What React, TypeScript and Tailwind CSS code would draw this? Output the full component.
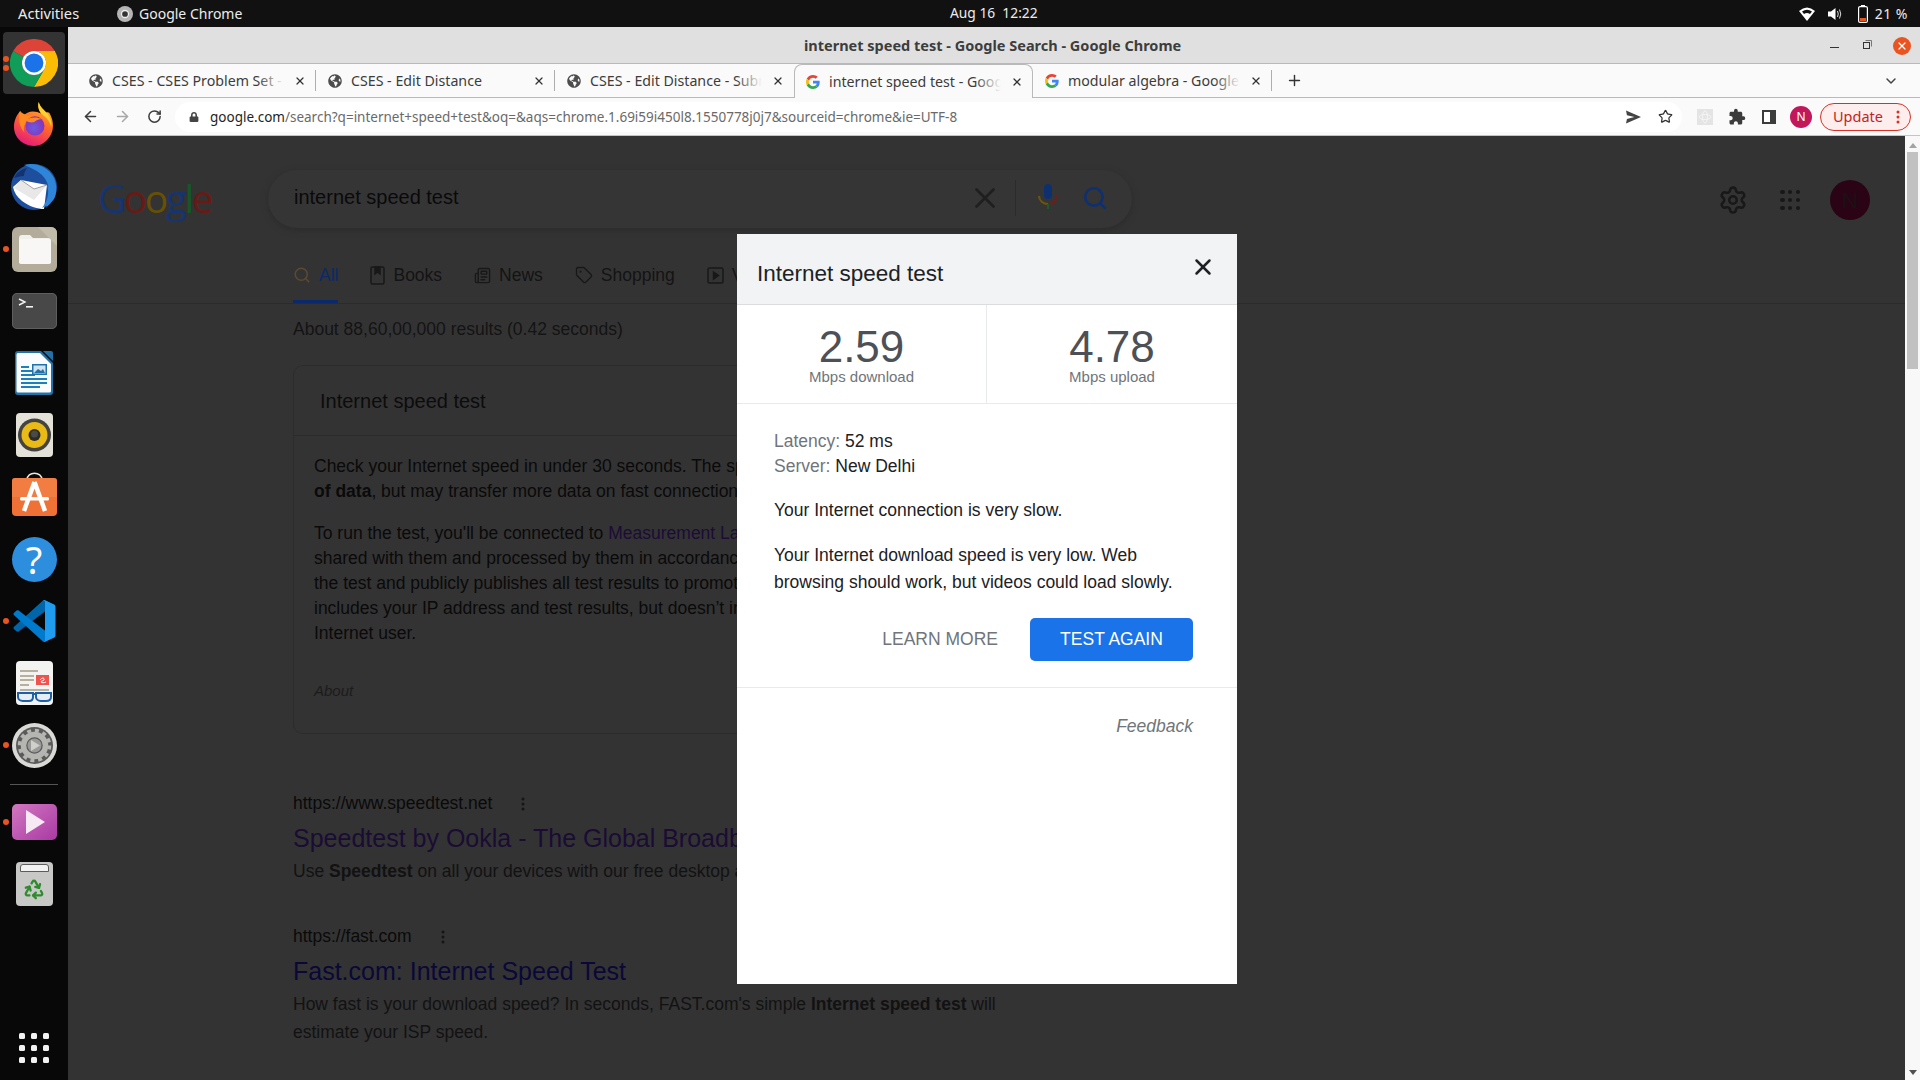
import React from "react";
import { ArrowLeft, ArrowRight, RotateCw, X, Plus, ChevronDown, Star, Search, Settings, Tag, Newspaper, Recycle } from "lucide-react";
import { FaGlobeAmericas, FaLock } from "react-icons/fa";
import { MdExtension } from "react-icons/md";

const Dot = () => <span className="w-[6px] h-[6px] rounded-full bg-[#e95420] block" />;

function GoogleG({ size = 14 }: { size?: number }) {
  return (
    <svg width={size} height={size} viewBox="0 0 48 48" className="shrink-0">
      <path fill="#EA4335" d="M24 9.5c3.5 0 6.7 1.2 9.2 3.6l6.9-6.9C35.9 2.4 30.4 0 24 0 14.6 0 6.5 5.4 2.6 13.2l8 6.2C12.4 13.7 17.7 9.5 24 9.5z" />
      <path fill="#4285F4" d="M46.9 24.5c0-1.6-.1-3.1-.4-4.5H24v9h12.9c-.6 3-2.2 5.5-4.7 7.2l7.7 6c4.5-4.2 7-10.3 7-17.7z" />
      <path fill="#FBBC05" d="M10.5 28.6c-.5-1.4-.8-3-.8-4.6s.3-3.2.8-4.6l-8-6.2C.9 16.5 0 20.1 0 24s.9 7.5 2.6 10.8l7.9-6.2z" />
      <path fill="#34A853" d="M24 48c6.5 0 11.9-2.1 15.9-5.8l-7.7-6c-2.2 1.4-4.9 2.3-8.2 2.3-6.3 0-11.6-4.2-13.5-9.9l-8 6.2C6.5 42.6 14.6 48 24 48z" />
    </svg>
  );
}

function ChromeLogo() {
  return (
    <svg width="48" height="48" viewBox="0 0 48 48">
      <path fill="#db4437" d="M3.2 12A24 24 0 0 1 44.8 12H24A12 12 0 0 0 13.6 18Z" />
      <path fill="#fbbc05" d="M44.8 12A24 24 0 0 1 24 48L34.4 30A12 12 0 0 0 24 12Z" />
      <path fill="#0f9d58" d="M3.2 12L13.6 18A12 12 0 0 0 34.4 30L24 48A24 24 0 0 1 3.2 12Z" />
      <circle cx="24" cy="24" r="12" fill="#fff" />
      <circle cx="24" cy="24" r="9.4" fill="#1a73e8" />
    </svg>
  );
}

function Firefox() {
  return (
    <svg width="42" height="44" viewBox="0 0 44 46" className="mb-[3px]">
      <defs>
        <linearGradient id="ff1" x1="0.7" y1="0" x2="0.3" y2="1">
          <stop offset="0" stopColor="#ffbd2e" />
          <stop offset="0.45" stopColor="#ff6a28" />
          <stop offset="1" stopColor="#e5187f" />
        </linearGradient>
        <radialGradient id="ff2" cx="0.45" cy="0.6" r="0.6">
          <stop offset="0" stopColor="#6a5ce0" />
          <stop offset="1" stopColor="#8a2fb8" />
        </radialGradient>
      </defs>
      <path fill="url(#ff1)" d="M27 0c1 5 5 8 8 11 2-1 3 0 4 2 4 8 4 17-1 24-4 6-10 9-16 9C10 46 1 37 1 26 1 19 4 13 8 9c0 3 1 5 2 6 3-3 7-5 11-5 3 0 6 1 8 2-2-4-3-8-2-12z" />
      <path fill="#ffd02e" d="M27 0c1 5 6 9 9 12 3 4 5 9 4 14-1-5-4-9-8-12-4-3-7-8-5-14z" />
      <path fill="#ff8a1f" d="M7 10c3 1 5 4 9 4 4 0 5-1 7 0-5 1-9 4-10 8-2 4-2 7-1 10-5-5-7-15-5-22z" />
      <circle cx="23" cy="25" r="10" fill="url(#ff2)" />
      <path fill="#ff8a1f" d="M13 19c4-3 12-4 17-1-5 0-6 2-8 3-3 1-6 0-9-2z" />
    </svg>
  );
}

function Thunderbird() {
  return (
    <svg width="48" height="48" viewBox="0 0 48 48" className="mb-[3px]">
      <circle cx="24" cy="25" r="23" fill="#1d4f9e" />
      <path fill="#2f86d8" d="M14 3c10-3 24 1 30 13 3 7 3 15 0 21l-8 9c5-10 5-24-4-33C26 8 20 5 14 3z" />
      <path fill="#12336f" d="M4 16c3-6 8-9 13-10-2 3-3 5-3 8-4 0-7 1-10 2z" />
      <path fill="#fff" d="M3 25l8-7 26 5-3 24c-6 0-14-2-22-8-5-4-8-9-9-14z" />
      <path fill="#e8e8e8" d="M11 18l13 9 13-4-13 15-20-12z" />
      <path fill="none" stroke="#8a8a8a" strokeWidth="0.8" d="M11 18l13 9 13-4" />
      <path fill="#2f86d8" d="M37 23c3 8 0 17-5 23l8-4c3-6 3-14-3-19z" />
    </svg>
  );
}

function Files() {
  return (
    <svg width="45" height="45" viewBox="0 0 45 45">
      <rect x="0" y="0" width="45" height="45" rx="6" fill="#b3ac9b" />
      <path fill="#c1bbaa" d="M26 0h13a6 6 0 0 1 6 6v13z" />
      <path fill="#f2f0ed" d="M7 11a3 3 0 0 1 3-3h8l3 3h15a3 3 0 0 1 3 3v20a3 3 0 0 1-3 3H10a3 3 0 0 1-3-3z" />
      <rect x="7" y="12" width="32" height="25" rx="2.5" fill="#f8f7f5" />
    </svg>
  );
}

function Terminal() {
  return (
    <svg width="45" height="36" viewBox="0 0 45 36">
      <rect width="45" height="36" rx="5" fill="#484848" />
      <rect x="0.5" y="0.5" width="44" height="35" rx="4.5" fill="none" stroke="#5e5e5e" />
      <path d="M7 6l6 3-6 3" fill="none" stroke="#f2f2f2" strokeWidth="1.4" />
      <rect x="14" y="13" width="7" height="1.6" fill="#f2f2f2" />
    </svg>
  );
}

function Writer() {
  return (
    <svg width="38" height="44" viewBox="0 0 38 44">
      <path fill="#2272a8" d="M3 0h23l12 12v29a3 3 0 0 1-3 3H3a3 3 0 0 1-3-3V3a3 3 0 0 1 3-3z" />
      <path fill="#f9fbfc" d="M3 2h22l11 11v27a1.5 1.5 0 0 1-1.5 1.5H3A1.5 1.5 0 0 1 1.500 40V3.500A1.500 1.500 0 0 1 3 2z" />
      <path fill="#2272a8" d="M28 0h8a2 2 0 0 1 2 2v8z" />
      <g fill="#1a80c0">
        <rect x="6" y="15" width="8" height="2" />
        <rect x="6" y="19" width="14" height="2" />
        <rect x="6" y="23" width="14" height="2" />
        <rect x="6" y="27" width="26" height="2" />
        <rect x="6" y="31" width="26" height="2" />
        <rect x="6" y="35" width="19" height="2" />
        <rect x="17" y="13" width="15" height="11" fill="#2272a8" />
      </g>
      <rect x="18.500" y="14.500" width="12" height="8" fill="#cfe3f0" />
      <path d="M19 22l4-4 3 2 2-2 2 4z" fill="#2272a8" />
    </svg>
  );
}

function Rhythmbox() {
  return (
    <svg width="37" height="44" viewBox="0 0 37 44">
      <rect width="37" height="44" rx="4" fill="#e4e1d8" />
      <circle cx="18.500" cy="22" r="16.500" fill="#45433f" />
      <circle cx="18.500" cy="22" r="13" fill="#e8bb17" />
      <circle cx="18.500" cy="22" r="6" fill="#2e2c28" />
      <circle cx="18.500" cy="21" r="3.500" fill="#4c4a44" />
    </svg>
  );
}

function Software() {
  return (
    <svg width="45" height="44" viewBox="0 0 45 44" className="mb-[7px]">
      <path d="M15 8c0-9 15-9 15 0" fill="none" stroke="#efe5d8" strokeWidth="1.500" />
      <path fill="#ef7136" d="M3 6h39a3 3 0 0 1 3 3v31a4 4 0 0 1-4 4H4a4 4 0 0 1-4-4V9a3 3 0 0 1 3-3z" />
      <path fill="#f58a4f" d="M0 25h45V9a3 3 0 0 0-3-3H3a3 3 0 0 0-3 3z" opacity="0.5" />
      <path d="M22.500 10L12 39M22.500 10L33 39" stroke="#fff" strokeWidth="4.500" fill="none" />
      <rect x="8" y="25" width="29" height="3.500" rx="1.500" fill="#fff" />
    </svg>
  );
}

function Help() {
  return (
    <div className="w-[45px] h-[45px] rounded-full bg-[#2e8ede] flex items-center justify-center text-white text-[38px] leading-none font-['Noto_Sans',sans-serif]">?</div>
  );
}

function VSCode() {
  return (
    <svg width="43" height="42" viewBox="0 0 100 100">
      <path fill="#0065a9" d="M96.500 10.800L75.900.9c-2.400-1.200-5.200-.7-7.100 1.200L1.400 63.500c-1.800 1.700-1.800 4.500 0 6.200l5.500 5c1.500 1.300 3.700 1.400 5.300.2L93.400 13.300c2.700-2.100 6.600-.2 6.600 3.300v-.2c0-2.400-1.400-4.700-3.500-5.600z" />
      <path fill="#007acc" d="M96.500 89.200L75.900 99.100c-2.400 1.200-5.200.7-7.100-1.200L1.400 36.500c-1.800-1.700-1.800-4.500 0-6.200l5.500-5c1.500-1.300 3.700-1.400 5.300-.2l81.200 61.600c2.700 2.100 6.600.2 6.600-3.300v.2c0 2.400-1.400 4.700-3.500 5.600z" />
      <path fill="#1f9cf0" d="M75.900 99.100c-2.400 1.200-5.200.7-7.100-1.200 2.300 2.300 6.200.7 6.200-2.600V4.700c0-3.300-3.900-4.900-6.200-2.600 1.900-1.900 4.700-2.400 7.100-1.200l20.600 9.900c2.100 1 3.500 3.200 3.500 5.600v67.200c0 2.400-1.400 4.600-3.500 5.600z" />
    </svg>
  );
}

function Reader() {
  return (
    <svg width="37" height="44" viewBox="0 0 37 44">
      <rect width="37" height="44" rx="4" fill="#f3f3f1" />
      <g fill="#b6b09e">
        <rect x="4" y="9" width="18" height="2" />
        <rect x="4" y="14" width="14" height="2" />
        <rect x="4" y="18" width="14" height="2" />
        <rect x="4" y="23" width="9" height="2" />
        <rect x="4" y="28" width="29" height="2" />
      </g>
      <rect x="20" y="14" width="13" height="10" fill="#ef5350" />
      <path d="M24 19c2-3 5-2 4 0-1 1-3 1-3 2 1 1 3 1 5 0" stroke="#fff" fill="none" strokeWidth="1" />
      <path d="M2 32h15v4c0 3-2 4-4 4H7c-3 0-5-2-5-4zM20 32h15v4c0 3-2 4-5 4h-5c-3 0-5-2-5-4z" fill="#e6eef5" stroke="#1f5fa8" strokeWidth="2" />
      <rect x="16" y="32" width="5" height="2" fill="#1f5fa8" />
    </svg>
  );
}

function Gear() {
  return (
    <svg width="45" height="45" viewBox="0 0 45 45">
      <circle cx="22.500" cy="22.500" r="22.500" fill="#d9d9d6" />
      <circle cx="22.500" cy="22.500" r="18.500" fill="#5a5a5a" />
      <circle cx="22.500" cy="22.500" r="11" fill="none" stroke="#b5b5b2" strokeWidth="5.500" />
      <circle cx="22.500" cy="22.500" r="15" fill="none" stroke="#b5b5b2" strokeWidth="3.500" strokeDasharray="4 3.850" />
      <circle cx="22.500" cy="22.500" r="7" fill="#9a9a98" />
      <path d="M19 17l9 5.500-9 5.500z" fill="#cfcfcc" />
    </svg>
  );
}

function Video() {
  return (
    <svg width="45" height="36" viewBox="0 0 45 36">
      <defs>
        <linearGradient id="vd" x1="0" y1="0" x2="1" y2="1">
          <stop offset="0" stopColor="#d277c0" />
          <stop offset="1" stopColor="#a93aa4" />
        </linearGradient>
      </defs>
      <rect width="45" height="36" rx="5" fill="url(#vd)" />
      <path d="M14 6l19 12-19 12z" fill="#f6e9f4" />
    </svg>
  );
}

function Trash() {
  return (
    <div className="relative w-[37px] h-[44px] rounded-[4px] bg-[#c8c8c6] flex items-center justify-center pt-[10px]">
      <div className="absolute top-[2px] left-[4px] right-[4px] h-[8px] bg-[#f2f2f2] border border-[#5c5c5c] rounded-t-[3px]" />
      <Recycle size={22} color="#2e8b2e" strokeWidth={2.500} />
    </div>
  );
}

function DockItem({ children, dots = 0, active = false }: { children: React.ReactNode; dots?: number; active?: boolean }) {
  return (
    <div className="relative w-[68px] h-[62px] flex items-center justify-center">
      {active && <div className="absolute left-[3px] top-0 w-[62px] h-[62px] bg-[#333] rounded-[4px]" />}
      <div className="relative">{children}</div>
      {dots > 0 && (
        <div className="absolute left-[3px] top-0 bottom-0 flex flex-col justify-center gap-[3px]">
          {Array.from({ length: dots }).map((_, i) => <Dot key={i} />)}
        </div>
      )}
    </div>
  );
}

function Dock() {
  return (
    <div className="w-[68px] shrink-0 bg-[#080808] flex flex-col pt-[5px] pb-[17px]">
      <DockItem active dots={2}><ChromeLogo /></DockItem>
      <DockItem><Firefox /></DockItem>
      <DockItem><Thunderbird /></DockItem>
      <DockItem dots={1}><Files /></DockItem>
      <DockItem><Terminal /></DockItem>
      <DockItem><Writer /></DockItem>
      <DockItem><Rhythmbox /></DockItem>
      <DockItem><Software /></DockItem>
      <DockItem><Help /></DockItem>
      <DockItem dots={1}><VSCode /></DockItem>
      <DockItem><Reader /></DockItem>
      <DockItem dots={1}><Gear /></DockItem>
      <div className="mx-[10px] mt-[8px] mb-[6px] h-px bg-[#555]" />
      <DockItem dots={1}><Video /></DockItem>
      <DockItem><Trash /></DockItem>
      <div className="mt-auto ml-[19px] grid grid-cols-3 gap-[6px] w-[30px]">
        {Array.from({ length: 9 }).map((_, i) => <span key={i} className="w-[6px] h-[6px] rounded-[1.500px] bg-[#f2f2f2]" />)}
      </div>
    </div>
  );
}

function TopBar() {
  return (
    <div className="h-[27px] shrink-0 bg-[#111111] flex items-center text-[#ececec] text-[14px] font-['Noto_Sans',sans-serif]">
      <span className="ml-[18px] w-[99px] text-[14.700px]">Activities</span>
      <svg width="16" height="16" viewBox="0 0 16 16" className="mr-[6px]">
        <circle cx="8" cy="8" r="8" fill="#b5b5b5" />
        <circle cx="8" cy="8" r="3.500" fill="#333" stroke="#eee" strokeWidth="1.300" />
      </svg>
      <span className="w-[811px]">Google Chrome</span>
      <span className="text-[13.800px] whitespace-pre">Aug 16  12:22</span>
      <div className="ml-auto mr-[12px] flex items-center">
        <svg width="16" height="14" viewBox="0 0 16 14" className="mr-[13px]">
          <path d="M0 4 Q8 -3 16 4 L8 14Z" fill="#fff" />
          <path d="M3 4.500 Q8 1 13 4.500 L11 7 Q8 5 5 7Z" fill="#111" />
        </svg>
        <svg width="14" height="14" viewBox="0 0 14 14" className="mr-[16px]">
          <path d="M0 4.500h3L7.500 1v12L3 9.500H0z" fill="#fff" />
          <path d="M9.500 4q1.500 3 0 6M11.500 2.500q2.500 4.500 0 9" stroke="#ddd" fill="none" strokeWidth="1" />
        </svg>
        <svg width="10" height="18" viewBox="0 0 10 18" className="mr-[7px]">
          <rect x="3" y="0" width="4" height="2" fill="#fff" />
          <rect x="0.600" y="1.600" width="8.800" height="15.800" rx="1.500" fill="none" stroke="#fff" strokeWidth="1.200" />
          <rect x="2" y="13" width="6" height="3" fill="#e95420" />
        </svg>
        <span className="text-[14px] tracking-[0.5px]">21 %</span>
      </div>
    </div>
  );
}

type TabT = { title: string; icon: "globe" | "g"; active?: boolean };
const TABS: TabT[] = [
  { title: "CSES - CSES Problem Set - Tasks", icon: "globe" },
  { title: "CSES - Edit Distance", icon: "globe" },
  { title: "CSES - Edit Distance - Submit", icon: "globe" },
  { title: "internet speed test - Google Search", icon: "g", active: true },
  { title: "modular algebra - Google Search", icon: "g" },
];

function Tab({ t, sep }: { t: TabT; sep: boolean }) {
  return (
    <div className={`relative w-[239px] flex items-center shrink-0 ${t.active ? "h-[34px] pl-[10px] bg-[#fafafa] border-x border-t border-[#b9b9b9] rounded-t-[8px] z-10" : "h-[33px] pl-[11px]"}`}>
      <div className="w-[16px] flex justify-center shrink-0">
        {t.icon === "globe" ? <FaGlobeAmericas size={14} color="#4d4d4d" /> : <GoogleG size={14} />}
      </div>
      <div className="relative ml-[8px] w-[172px] overflow-hidden whitespace-nowrap text-[14.200px] leading-[20px] text-[#3c3c3c]">
        {t.title}
        <div className="absolute top-0 right-0 bottom-0 w-[26px] bg-gradient-to-r from-transparent to-[#fafafa]" />
      </div>
      <X size={12} color="#333" strokeWidth={2.500} className="ml-[10px]" />
      {sep && <div className="absolute right-0 top-[6px] h-[21px] w-px bg-[#aeaeae]" />}
    </div>
  );
}

function TitleBar() {
  return (
    <div className="h-[37px] shrink-0 bg-[#e0e0e0] border-b border-[#b9b9b9] flex items-center relative">
      <span className="ml-[736px] mt-[2px] text-[14.500px] font-bold text-[#3d3d3d]">internet speed test - Google Search - Google Chrome</span>
      <div className="ml-auto mt-[1px] flex items-center">
        <span className="w-[9px] h-px bg-[#333] mt-[4px]" />
        <svg width="9" height="9" viewBox="0 0 9 9" className="ml-[24px] mb-[2px]">
          <rect x="0.500" y="2.500" width="6" height="6" fill="#e0e0e0" stroke="#333" />
          <path d="M2.500 0.500h6v6" fill="none" stroke="#777" />
        </svg>
        <div className="ml-[21px] mr-[9px] w-[18px] h-[18px] rounded-full bg-[#e95420] flex items-center justify-center">
          <X size={12} color="#fff" strokeWidth={2.500} />
        </div>
      </div>
    </div>
  );
}

function TabStrip() {
  return (
    <div className="h-[34px] shrink-0 bg-[#fafafa] border-b border-[#b9b9b9] flex items-start pl-[9px]">
      {TABS.map((t, i) => <Tab key={i} t={t} sep={!t.active && i !== 2} />)}
      <Plus size={17} color="#333" strokeWidth={2} className="ml-[14px] self-center" />
      <ChevronDown size={16} color="#444" strokeWidth={2.200} className="ml-auto mr-[21px] self-center" />
    </div>
  );
}

function Toolbar() {
  return (
    <div className="h-[38px] shrink-0 bg-[#fafafa] border-b border-[#c4c4c4] flex items-center pl-[6px]">
      <div className="w-[32px] flex justify-center"><ArrowLeft size={17} color="#3c3c3c" strokeWidth={2.200} /></div>
      <div className="w-[32px] flex justify-center"><ArrowRight size={17} color="#a8a8a8" strokeWidth={2.200} /></div>
      <div className="w-[32px] flex justify-center"><RotateCw size={15} color="#3c3c3c" strokeWidth={2.400} /></div>
      <div className="ml-[5px] w-[1507px] h-[30px] rounded-full bg-white flex items-center pl-[14px] pr-[9px]">
        <FaLock size={10} color="#444" />
        <span className="ml-[11px] mt-[1px] text-[13.500px] whitespace-nowrap text-[#6a6a6a]"><span className="text-[#1f1f1f]">google.com</span>/search?q=internet+speed+test&amp;oq=&amp;aqs=chrome.1.69i59i450l8.1550778j0j7&amp;sourceid=chrome&amp;ie=UTF-8</span>
        <svg width="15" height="14" viewBox="0 0 16 14" className="ml-auto"><path d="M0 0l16 7-16 7 1-5 8-2-8-2z" fill="#444" /></svg>
        <Star size={15} color="#333" strokeWidth={2} className="ml-[17px]" />
      </div>
      <div className="ml-[15px] w-[16px] h-[16px] bg-[#e4e4e4] flex items-center justify-center">
        <svg width="14" height="14" viewBox="0 0 14 14" fill="none" stroke="#f8f8f8" strokeWidth="0.800"><ellipse cx="7" cy="7" rx="6" ry="2.500" /><ellipse cx="7" cy="7" rx="2.500" ry="6" /></svg>
      </div>
      <MdExtension size={18} color="#3c3c3c" className="ml-[15px]" />
      <svg width="14" height="14" viewBox="0 0 14 14" className="ml-[16px]"><rect x="1" y="1" width="12" height="12" fill="#fff" stroke="#3c3c3c" strokeWidth="2" /><rect x="8" y="1" width="5" height="12" fill="#3c3c3c" /></svg>
      <div className="ml-[14px] w-[22px] h-[22px] rounded-full bg-[#c2185b] flex items-center justify-center text-white text-[12px] font-['Noto_Sans',sans-serif]">N</div>
      <div className="ml-[8px] w-[91px] h-[28px] rounded-full bg-[#fdeeed] border border-[#d93025] flex items-center pl-[12px] text-[#c5221f] text-[14.500px]">
        Update
        <svg width="4" height="14" viewBox="0 0 4 14" className="ml-auto mr-[10px]" fill="#d93025"><circle cx="2" cy="2" r="1.500" /><circle cx="2" cy="7" r="1.500" /><circle cx="2" cy="12" r="1.500" /></svg>
      </div>
    </div>
  );
}

function NavItem({ icon, label, active }: { icon: React.ReactNode; label: string; active?: boolean }) {
  return (
    <div className={`relative flex items-center gap-[8px] h-[43px] pb-[13px] ${active ? "text-[#0d2a66]" : "text-[#141414]"}`}>
      {icon}
      <span>{label}</span>
      {active && <div className="absolute left-0 right-0 bottom-0 h-[3px] bg-[#0b2a6b]" />}
    </div>
  );
}

function Page() {
  return (
    <div className="flex-1 min-w-0 overflow-hidden bg-[#333333] font-['Liberation_Sans',sans-serif] text-[17.500px] text-[#0a0a0a] whitespace-nowrap">
      <div className="flex items-center pl-[30px] pt-[34px] pr-[35px]">
        <span className="w-[170px] -mt-[3px] text-[39px] leading-[58px] tracking-[-2.500px] font-medium font-['Open_Sans',sans-serif]">
          <span className="text-[#16346e]">G</span><span className="text-[#661b16]">o</span><span className="text-[#665006]">o</span><span className="text-[#16346e]">g</span><span className="text-[#175627]">l</span><span className="text-[#661b16]">e</span>
        </span>
        <div className="w-[864px] h-[58px] rounded-full bg-[#353535] shadow-[0_2px_6px_#2b2b2b] flex items-center pl-[26px] text-[20px] text-[#0a0a0a]">
          <span className="-mt-[4px]">internet speed test</span>
          <div className="ml-auto -mt-[2px] flex items-center pr-[24px]">
            <X size={34} color="#1f1f1f" strokeWidth={1.900} />
            <div className="w-px h-[36px] bg-[#2b2b2b] ml-[13px] mr-[22px]" />
            <svg width="20" height="30" viewBox="0 0 20 30">
              <rect x="6" y="1" width="8" height="15" rx="4" fill="#0f3070" />
              <path d="M1 13a9 8 0 0 0 9 8" stroke="#6e5508" strokeWidth="2" fill="none" />
              <path d="M19 13a9 8 0 0 1-9 8" stroke="#6e1f1a" strokeWidth="2" fill="none" />
              <rect x="9" y="21" width="2" height="5" fill="#1c5c2c" />
            </svg>
            <Search size={26} color="#0f3070" strokeWidth={2.400} className="ml-[24px]" />
          </div>
        </div>
        <Settings size={30} color="#181818" strokeWidth={2} className="ml-auto mt-[2px]" />
        <div className="ml-[32px] mt-[2px] grid grid-cols-3 gap-[3.500px] w-[20px]">
          {Array.from({ length: 9 }).map((_, i) => <span key={i} className="w-[4.500px] h-[4.500px] rounded-full bg-[#181818]" />)}
        </div>
        <div className="ml-[30px] mt-[2px] w-[40px] h-[40px] rounded-full bg-[#2a0414] flex items-center justify-center text-[22px] text-[#1a1116]">N</div>
      </div>
      <div className="mt-[32px] pl-[225px] flex gap-[32px] border-b border-[#2b2b2b] h-[44px]">
        <NavItem active label="All" icon={<Search size={18} color="#5a4a30" strokeWidth={2} />} />
        <NavItem label="Books" icon={<svg width="15" height="19" viewBox="0 0 15 19" fill="none" stroke="#181818" strokeWidth="1.500"><rect x="1" y="1" width="13" height="17" rx="1.500" /><path d="M5 1v7l2.500-2 2.500 2V1z" fill="#181818" /></svg>} />
        <NavItem label="News" icon={<Newspaper size={17} color="#181818" strokeWidth={2} />} />
        <NavItem label="Shopping" icon={<Tag size={18} color="#181818" strokeWidth={1.800} />} />
        <NavItem label="Videos" icon={<svg width="17" height="17" viewBox="0 0 17 17" fill="none" stroke="#181818" strokeWidth="1.500"><rect x="1" y="1" width="15" height="15" rx="1.500" /><path d="M6.500 5l5 3.500-5 3.500z" fill="#181818" /></svg>} />
      </div>
      <div className="pl-[225px] mt-[13px] leading-[25px] text-[#141414]">About 88,60,00,000 results (0.42 seconds)</div>

      <div className="ml-[225px] mt-[23px] w-[900px] h-[369px] rounded-[10px] border border-[#2c2c2c]">
        <div className="h-[70px] border-b border-[#2c2c2c] pl-[26px] pt-[1px] flex items-center text-[20px] text-[#0c0c0c]">Internet speed test</div>
        <div className="pl-[20px] pt-[18px] leading-[25px]">
          <p>Check your Internet speed in under 30 seconds. The speed test usually transfers less than 40 MB</p>
          <p><b>of data</b>, but may transfer more data on fast connections.</p>
          <p className="mt-[17px]">To run the test, you'll be connected to <span className="text-[#1c0c36]">Measurement Lab (M-Lab)</span> and your IP address will be</p>
          <p>shared with them and processed by them in accordance with their privacy policy.</p>
          <p>the test and publicly publishes all test results to promote Internet research.</p>
          <p>includes your IP address and test results, but doesn’t include any other information</p>
          <p>Internet user.</p>
          <p className="mt-[32px] text-[15px] italic text-[#1c1c1c]">About</p>
        </div>
      </div>

      <div className="pl-[225px]">
        <div className="mt-[57px] flex items-center h-[25px]">
          <span>https://www.speedtest.net</span>
          <svg width="4" height="14" viewBox="0 0 4 14" fill="#151515" className="ml-[29px]"><circle cx="2" cy="2" r="1.500" /><circle cx="2" cy="7" r="1.500" /><circle cx="2" cy="12" r="1.500" /></svg>
        </div>
        <div className="mt-[6px] text-[25px] leading-[32px] text-[#1a0c33]">Speedtest by Ookla - The Global Broadband Speed Test</div>
        <div className="mt-[5px] leading-[25px] text-[#121212]">Use <b>Speedtest</b> on all your devices with our free desktop and mobile apps.</div>
        <div className="mt-[40px] flex items-center h-[25px]">
          <span>https://fast.com</span>
          <svg width="4" height="14" viewBox="0 0 4 14" fill="#151515" className="ml-[29px]"><circle cx="2" cy="2" r="1.500" /><circle cx="2" cy="7" r="1.500" /><circle cx="2" cy="12" r="1.500" /></svg>
        </div>
        <div className="mt-[6px] text-[25px] leading-[32px] text-[#0a0838]">Fast.com: Internet Speed Test</div>
        <div className="mt-[3px] leading-[28px] text-[#121212]">How fast is your download speed? In seconds, FAST.com's simple <b>Internet speed test</b> will<br />estimate your ISP speed.</div>
      </div>
    </div>
  );
}

function Scrollbar() {
  return (
    <div className="w-[15px] shrink-0 bg-[#f8f8f8] flex flex-col items-center">
      <div className="h-[16px] flex items-center justify-center"><div className="w-0 h-0 border-x-[4px] border-x-transparent border-b-[5px] border-b-[#a3a3a3] mt-[2px]" /></div>
      <div className="w-[11px] h-[217px] bg-[#c1c1c1]" />
      <div className="mt-auto h-[16px] flex items-center justify-center"><div className="w-0 h-0 border-x-[4px] border-x-transparent border-t-[5px] border-t-[#505050]" /></div>
    </div>
  );
}

function Modal() {
  return (
    <div className="absolute left-[669px] top-[98px] w-[500px] h-[750px] bg-white font-['Liberation_Sans',sans-serif] text-[17.500px] text-[#202124]">
      <div className="relative h-[71px] bg-[#f1f3f4] border-b border-[#dadce0] pl-[20px] pt-[25px] text-[22.500px] leading-[30px]">
        Internet speed test
        <X size={26} color="#202124" strokeWidth={2.300} className="absolute right-[21px] top-[20px]" />
      </div>
      <div className="flex h-[99px] border-b border-[#e8eaed]">
        <div className="w-[250px] border-r border-[#e8eaed] text-center pt-[17px]">
          <div className="text-[44px] leading-[50px] text-[#4d5156]">2.59</div>
          <div className="text-[15px] leading-[18px] -mt-[4px] text-[#70757a]">Mbps download</div>
        </div>
        <div className="flex-1 text-center pt-[17px]">
          <div className="text-[44px] leading-[50px] text-[#4d5156]">4.78</div>
          <div className="text-[15px] leading-[18px] -mt-[4px] text-[#70757a]">Mbps upload</div>
        </div>
      </div>
      <div className="pl-[37px] pr-[44px] pt-[25px]">
        <div className="leading-[25px]"><span className="text-[#70757a]">Latency:</span> 52 ms</div>
        <div className="leading-[25px]"><span className="text-[#70757a]">Server:</span> New Delhi</div>
        <div className="mt-[19px] leading-[25px]">Your Internet connection is very slow.</div>
        <div className="mt-[19px] leading-[27px]">Your Internet download speed is very low. Web<br />browsing should work, but videos could load slowly.</div>
        <div className="mt-[22px] flex justify-end items-center">
          <span className="text-[#70757a]">LEARN MORE</span>
          <div className="ml-[32px] w-[163px] h-[43px] rounded-[5px] bg-[#1a73e8] text-white flex items-center justify-center">TEST AGAIN</div>
        </div>
      </div>
      <div className="mt-[26px] border-t border-[#e8eaed] pr-[44px] pt-[26px] text-right italic text-[#70757a] leading-[25px]">Feedback</div>
    </div>
  );
}

export default function App() {
  return (
    <div className="w-[1920px] h-[1080px] overflow-hidden flex flex-col bg-[#333] font-['Noto_Sans',sans-serif]">
      <TopBar />
      <div className="flex flex-1 min-h-0">
        <Dock />
        <div className="flex-1 min-w-0 flex flex-col">
          <TitleBar />
          <TabStrip />
          <Toolbar />
          <div className="relative flex-1 min-h-0 flex">
            <Page />
            <Scrollbar />
            <Modal />
          </div>
        </div>
      </div>
    </div>
  );
}
